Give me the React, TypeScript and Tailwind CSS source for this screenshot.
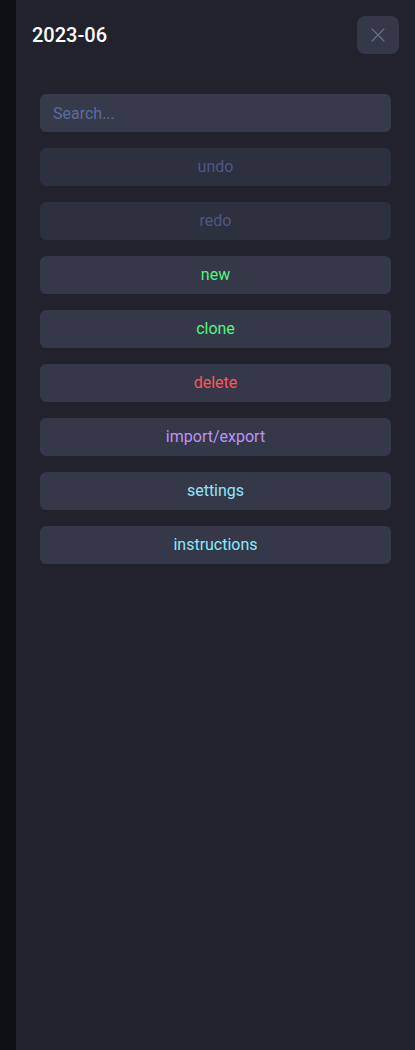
import { X } from 'lucide-react';

const actions = [
  { label: 'undo', color: 'text-[#4f5884]', disabled: true },
  { label: 'redo', color: 'text-[#4f5884]', disabled: true },
  { label: 'new', color: 'text-[#50fa7b]' },
  { label: 'clone', color: 'text-[#50fa7b]' },
  { label: 'delete', color: 'text-[#ff5555]' },
  { label: 'import/export', color: 'text-[#bd93f9]' },
  { label: 'settings', color: 'text-[#8be9fd]' },
  { label: 'instructions', color: 'text-[#8be9fd]' },
];

export default function App() {
  return (
    <div className="flex h-[1050px] w-full bg-[#0f1014] font-['Roboto',sans-serif]">
      <div className="w-4 shrink-0" />
      <aside className="flex flex-1 flex-col bg-[#21222c]">
        <div className="flex items-center justify-between pl-4 pr-4 pt-4">
          <h2 className="text-[20px] font-medium text-white">2023-06</h2>
          <button className="flex h-[38px] w-[42px] items-center justify-center rounded-lg bg-[#353849] text-[#6b7086]">
            <X size={24} strokeWidth={1.1} />
          </button>
        </div>

        <div className="mt-10 flex flex-col gap-4 px-6">
          <input
            placeholder="Search..."
            className="h-[38px] w-full rounded-md bg-[#363a4b] px-[13px] text-[16px] text-[#f8f8f2] outline-none placeholder:text-[#5d6aa0]"
          />
          {actions.map((a) => (
            <button
              key={a.label}
              disabled={a.disabled}
              className={`h-[38px] w-full rounded-md text-[16px] ${a.color} ${
                a.disabled ? 'bg-[#2d303e]' : 'bg-[#353848]'
              }`}
            >
              {a.label}
            </button>
          ))}
        </div>
      </aside>
    </div>
  );
}
